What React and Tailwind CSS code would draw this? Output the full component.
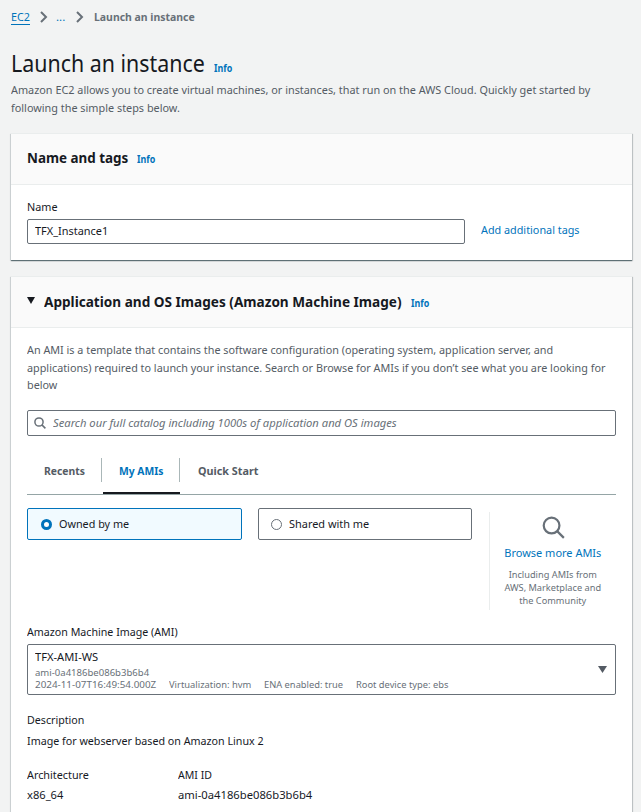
import React from "react";

const Info = () => (
  <a className="inline-block origin-left scale-x-[0.89] text-[10px] leading-[14px] font-bold text-[#0073bb]">Info</a>
);

// Condensed text run: narrows the glyphs while keeping their height
const T = ({ className = "scale-x-[0.94]", children }) => (
  <span className={"inline-block origin-left " + className}>{children}</span>
);

const Chevron = () => (
  <svg width="8" height="12" viewBox="0 0 8 12" fill="none" stroke="#687078" strokeWidth="2">
    <path d="M1 1l5 5-5 5" />
  </svg>
);

const Search = ({ size, stroke }) => (
  <svg width={size} height={size} viewBox="0 0 24 24" fill="none" stroke="#687078" strokeWidth={stroke}>
    <circle cx="10" cy="10" r="8.2" />
    <path d="M15.8 15.8l7 7" />
  </svg>
);

const Card = ({ className, children }) => (
  <section
    className={
      "mx-[11px] w-[621px] shrink-0 bg-white shadow-[0_1px_1px_0_rgba(0,28,36,0.5),1px_1px_1px_0_rgba(0,28,36,0.15),-1px_1px_1px_0_rgba(0,28,36,0.08)] " +
      className
    }
  >
    {children}
  </section>
);

export default function App() {
  return (
    <div className="flex h-[812px] w-[641px] flex-col overflow-hidden bg-[#f2f3f3] font-['Noto_Sans',sans-serif] text-[11.5px] leading-[18px] whitespace-nowrap text-[#16191f]">
      <nav className="flex h-[34px] shrink-0 items-center pl-[11px] text-[#0073bb]">
        <a className="mr-[10px] w-[19px] border-b border-[#0073bb] leading-[15px]">
          <T>EC2</T>
        </a>
        <Chevron />
        <span className="ml-[8px] w-[20px]">...</span>
        <Chevron />
        <span className="ml-[10px] text-[11px] font-bold text-[#687078]">
          <T className="scale-x-[0.95]">Launch an instance</T>
        </span>
      </nav>

      <header className="h-[99px] shrink-0 pl-[11px]">
        <div className="flex h-[47px] items-baseline gap-[9px] pt-[13px]">
          <h1 className="w-[194px] text-[23px] leading-[32px]">
            <T className="scale-x-[0.93]">Launch an instance</T>
          </h1>
          <Info />
        </div>
        <div className="w-[620px] text-[#545b64]">
          <T className="scale-x-[0.944]">
            Amazon EC2 allows you to create virtual machines, or instances, that run on the AWS Cloud. Quickly get started by
            <br />
            following the simple steps below.
          </T>
        </div>
      </header>

      <Card className="h-[127px] border-t border-[#eaeded]">
        <div className="flex h-[51px] items-baseline gap-[9px] border-b border-[#eaeded] bg-[#fafafa] pt-[13px] pl-[16px]">
          <h2 className="w-[101px] text-[15px] leading-[20px] font-bold">
            <T className="scale-x-[0.894]">Name and tags</T>
          </h2>
          <Info />
        </div>
        <div className="px-[16px] pt-[13px]">
          <label className="block">
            <T>Name</T>
          </label>
          <div className="mt-[3px] flex items-start gap-[16px]">
            <div className="h-[25px] w-[438px] rounded-[2px] border border-[#687078] pl-[7px] leading-[22px]">
              <T className="scale-x-[0.95]">TFX_Instance1</T>
            </div>
            <a className="mt-[2px] text-[#0073bb]">
              <T>Add additional tags</T>
            </a>
          </div>
        </div>
      </Card>

      <Card className="mt-[16px] h-[560px] border-t border-[#eaeded]">
        <div className="flex h-[51px] items-baseline border-b border-[#eaeded] bg-[#fafafa] pt-[14px] pl-[16px]">
          <svg className="mr-[9px] -translate-y-[2px]" width="8" height="8" viewBox="0 0 8 8">
            <path d="M0 0h8L4 7z" fill="#16191f" />
          </svg>
          <h2 className="mr-[9px] w-[358px] text-[15px] leading-[20px] font-bold">
            <T className="scale-x-[0.906]">Application and OS Images (Amazon Machine Image)</T>
          </h2>
          <Info />
        </div>

        <div className="px-[16px] pt-[13px]">
          <div className="h-[53px] leading-[17.7px] text-[#545b64]">
            <T className="scale-x-[0.94]">
              An AMI is a template that contains the software configuration (operating system, application server, and
              <br />
              applications) required to launch your instance. Search or Browse for AMIs if you don’t see what you are looking for
              <br />
              below
            </T>
          </div>

          <div className="mt-[16px] flex h-[26px] items-center gap-[7px] rounded-[2px] border border-[#687078] pl-[6px] text-[#687078] italic">
            <Search size={12} stroke={3} />
            <T className="scale-x-[0.975]">Search our full catalog including 1000s of application and OS images</T>
          </div>

          <div className="mt-[22px] flex h-[37px] border-b border-[#95a5a6] text-[11px] leading-[25px] font-bold text-[#545b64]">
            <div className="h-[24px] w-[75px] border-r border-[#aab7b8] pl-[17px]">
              <T>Recents</T>
            </div>
            <div className="ml-[1px] h-[36px] w-[77px] border-b-2 border-[#16191f] text-[#0073bb]">
              <div className="h-[24px] border-r border-[#aab7b8] pl-[16px]">
                <T>My AMIs</T>
              </div>
            </div>
            <div className="pl-[18px]">
              <T className="scale-x-[0.98]">Quick Start</T>
            </div>
          </div>

          <div className="mt-[13px] flex h-[102px]">
            <div className="flex h-[32px] w-[215px] items-center gap-[7px] rounded-[2px] border border-[#0073bb] bg-[#f1faff] pl-[13px]">
              <span className="h-[11px] w-[11px] rounded-full border-[3.5px] border-[#0073bb] bg-white" />
              <T>Owned by me</T>
            </div>
            <div className="ml-[16px] flex h-[32px] w-[214px] items-center gap-[7px] rounded-[2px] border border-[#687078] pl-[12px]">
              <span className="h-[11px] w-[11px] rounded-full border border-[#687078] bg-white" />
              <T className="scale-x-[0.95]">Shared with me</T>
            </div>
            <div className="mt-[4px] ml-[17px] flex h-[98px] w-[127px] flex-col items-center border-l border-[#eaeded] pt-[4px]">
              <Search size={23} stroke={2.3} />
              <a className="mt-[5px] scale-x-[0.955] text-[#0073bb]">Browse more AMIs</a>
              <p className="mt-[6px] scale-x-[0.97] text-center text-[9.5px] leading-[13px] text-[#687078]">
                Including AMIs from
                <br />
                AWS, Marketplace and
                <br />
                the Community
              </p>
            </div>
          </div>

          <div className="mt-[13px]">
            <T className="scale-x-[0.928]">Amazon Machine Image (AMI)</T>
          </div>
          <div className="mt-[3px] flex h-[51px] items-center justify-between rounded-[2px] border border-[#687078] pr-[8px] pl-[7px]">
            <div>
              <div className="h-[18px] leading-[16px]">
                <T className="scale-x-[0.97]">TFX-AMI-WS</T>
              </div>
              <div className="flex text-[9.5px] leading-[12px] text-[#687078]">
                <T className="scale-x-[1.005]">ami-0a4186be086b3b6b4</T>
              </div>
              <div className="flex text-[9.5px] leading-[12px] text-[#687078]">
                <div className="w-[134px]">
                  <T className="scale-x-[1.037]">2024-11-07T16:49:54.000Z</T>
                </div>
                <div className="w-[95px]">
                  <T className="scale-x-[0.985]">Virtualization: hvm</T>
                </div>
                <div className="w-[92px]">
                  <T className="scale-x-[0.98]">ENA enabled: true</T>
                </div>
                <T className="scale-x-[0.98]">Root device type: ebs</T>
              </div>
            </div>
            <svg width="9" height="7" viewBox="0 0 9 7">
              <path d="M0 0h9L4.500 7z" fill="#545b64" />
            </svg>
          </div>

          <div className="mt-[16px]">
            <T className="scale-x-[0.928]">Description</T>
          </div>
          <div className="mt-[3px]">
            <T className="scale-x-[0.931]">Image for webserver based on Amazon Linux 2</T>
          </div>

          <div className="mt-[16px] flex">
            <div className="w-[151px]">
              <T>Architecture</T>
              <div className="mt-[2px]">
                <T className="scale-x-[0.97]">x86_64</T>
              </div>
            </div>
            <div>
              <T className="scale-x-[0.92]">AMI ID</T>
              <div className="mt-[2px]">
                <T className="scale-x-[0.977]">ami-0a4186be086b3b6b4</T>
              </div>
            </div>
          </div>
        </div>
      </Card>
    </div>
  );
}
